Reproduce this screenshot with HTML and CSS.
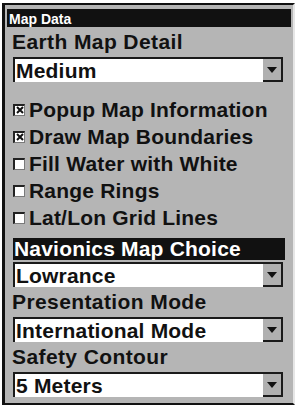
FILE: index.html
```html
<!DOCTYPE html>
<html>
<head>
<meta charset="utf-8">
<link rel="stylesheet" href="styles.css">
</head>
<body>
<div class="frame">
  <div class="titlebar">Map Data</div>
  <div class="content">
    <div class="label">Earth Map Detail</div>
    <div class="select"><span class="value">Medium</span><span class="btn"><span class="tri"></span></span></div>
    <div class="checks">
      <div class="check"><span class="box"><svg viewBox="0 0 8 8" width="8" height="8"><path d="M1 1L7 7M7 1L1 7" stroke="#111" stroke-width="2"/></svg></span><span>Popup Map Information</span></div>
      <div class="check"><span class="box"><svg viewBox="0 0 8 8" width="8" height="8"><path d="M1 1L7 7M7 1L1 7" stroke="#111" stroke-width="2"/></svg></span><span>Draw Map Boundaries</span></div>
      <div class="check"><span class="box"></span><span>Fill Water with White</span></div>
      <div class="check"><span class="box"></span><span>Range Rings</span></div>
      <div class="check"><span class="box"></span><span>Lat/Lon Grid Lines</span></div>
    </div>
    <div class="bar">Navionics Map Choice</div>
    <div class="select sel-tight"><span class="value">Lowrance</span><span class="btn"><span class="tri"></span></span></div>
    <div class="label">Presentation Mode</div>
    <div class="select"><span class="value">International Mode</span><span class="btn"><span class="tri"></span></span></div>
    <div class="label">Safety Contour</div>
    <div class="select"><span class="value">5 Meters</span><span class="btn"><span class="tri"></span></span></div>
  </div>
</div>
</body>
</html>
```

FILE: styles.css
```css
html, body {
  margin: 0;
  padding: 0;
  background: #fff;
}
body {
  font-family: "Liberation Sans", Arial, sans-serif;
  font-weight: bold;
  color: #111;
}
.frame {
  margin: 3px 0 0 2px;
  width: 288px;
  height: 398px;
  border-left: 3px solid #111;
  border-top: 2px solid #111;
  border-bottom: 2px solid #111;
  border-right: 2px solid #e6e6e6;
  background: #b5b5b5;
  display: flex;
  flex-direction: column;
}
.titlebar {
  margin: 4px 2px 0 2px;
  height: 18px;
  box-sizing: border-box;
  padding: 3px 0 0 2px;
  line-height: 15px;
  font-size: 14px;
  background: #111;
  color: #fff;
}
.content {
  display: flex;
  flex-direction: column;
  padding: 0 10px 0 8px;
}
.label {
  height: 30px;
  line-height: 30px;
  font-size: 21px;
  letter-spacing: 0.4px;
  margin-left: -1px;
}
.select {
  height: 25px;
  box-sizing: border-box;
  background: #fff;
  border-top: 2px solid #1a1a1a;
  border-left: 2px solid #1a1a1a;
  border-right: 2px solid #1a1a1a;
  display: flex;
  font-size: 21px;
  line-height: 23px;
  letter-spacing: 0.2px;
}
.value {
  flex: 1;
  padding-left: 1px;
}
.btn {
  width: 18px;
  height: 23px;
  box-sizing: border-box;
  background: #b0b0b0;
  border-bottom: 2px solid #1a1a1a;
  display: flex;
  align-items: center;
  justify-content: center;
}
.tri {
  width: 0;
  height: 0;
  border-left: 5px solid transparent;
  border-right: 5px solid transparent;
  border-top: 6px solid #111;
}
.checks {
  display: flex;
  flex-direction: column;
  margin: 14px 0 7px 0;
}
.check {
  height: 27px;
  line-height: 27px;
  font-size: 21px;
  letter-spacing: 0.2px;
  display: flex;
  align-items: center;
  gap: 4px;
}
.box {
  width: 12px;
  height: 12px;
  box-sizing: border-box;
  background: #fff;
  border-top: 2px solid #222;
  border-left: 2px solid #222;
  border-right: 1px solid #7a7a7a;
  border-bottom: 1px solid #7a7a7a;
  display: flex;
  align-items: center;
  justify-content: center;
}
.bar {
  height: 22px;
  line-height: 22px;
  font-size: 21px;
  letter-spacing: 0.2px;
  background: #111;
  color: #fff;
  margin-right: -2px;
  padding-left: 1px;
  margin-bottom: 2px;
}
```
